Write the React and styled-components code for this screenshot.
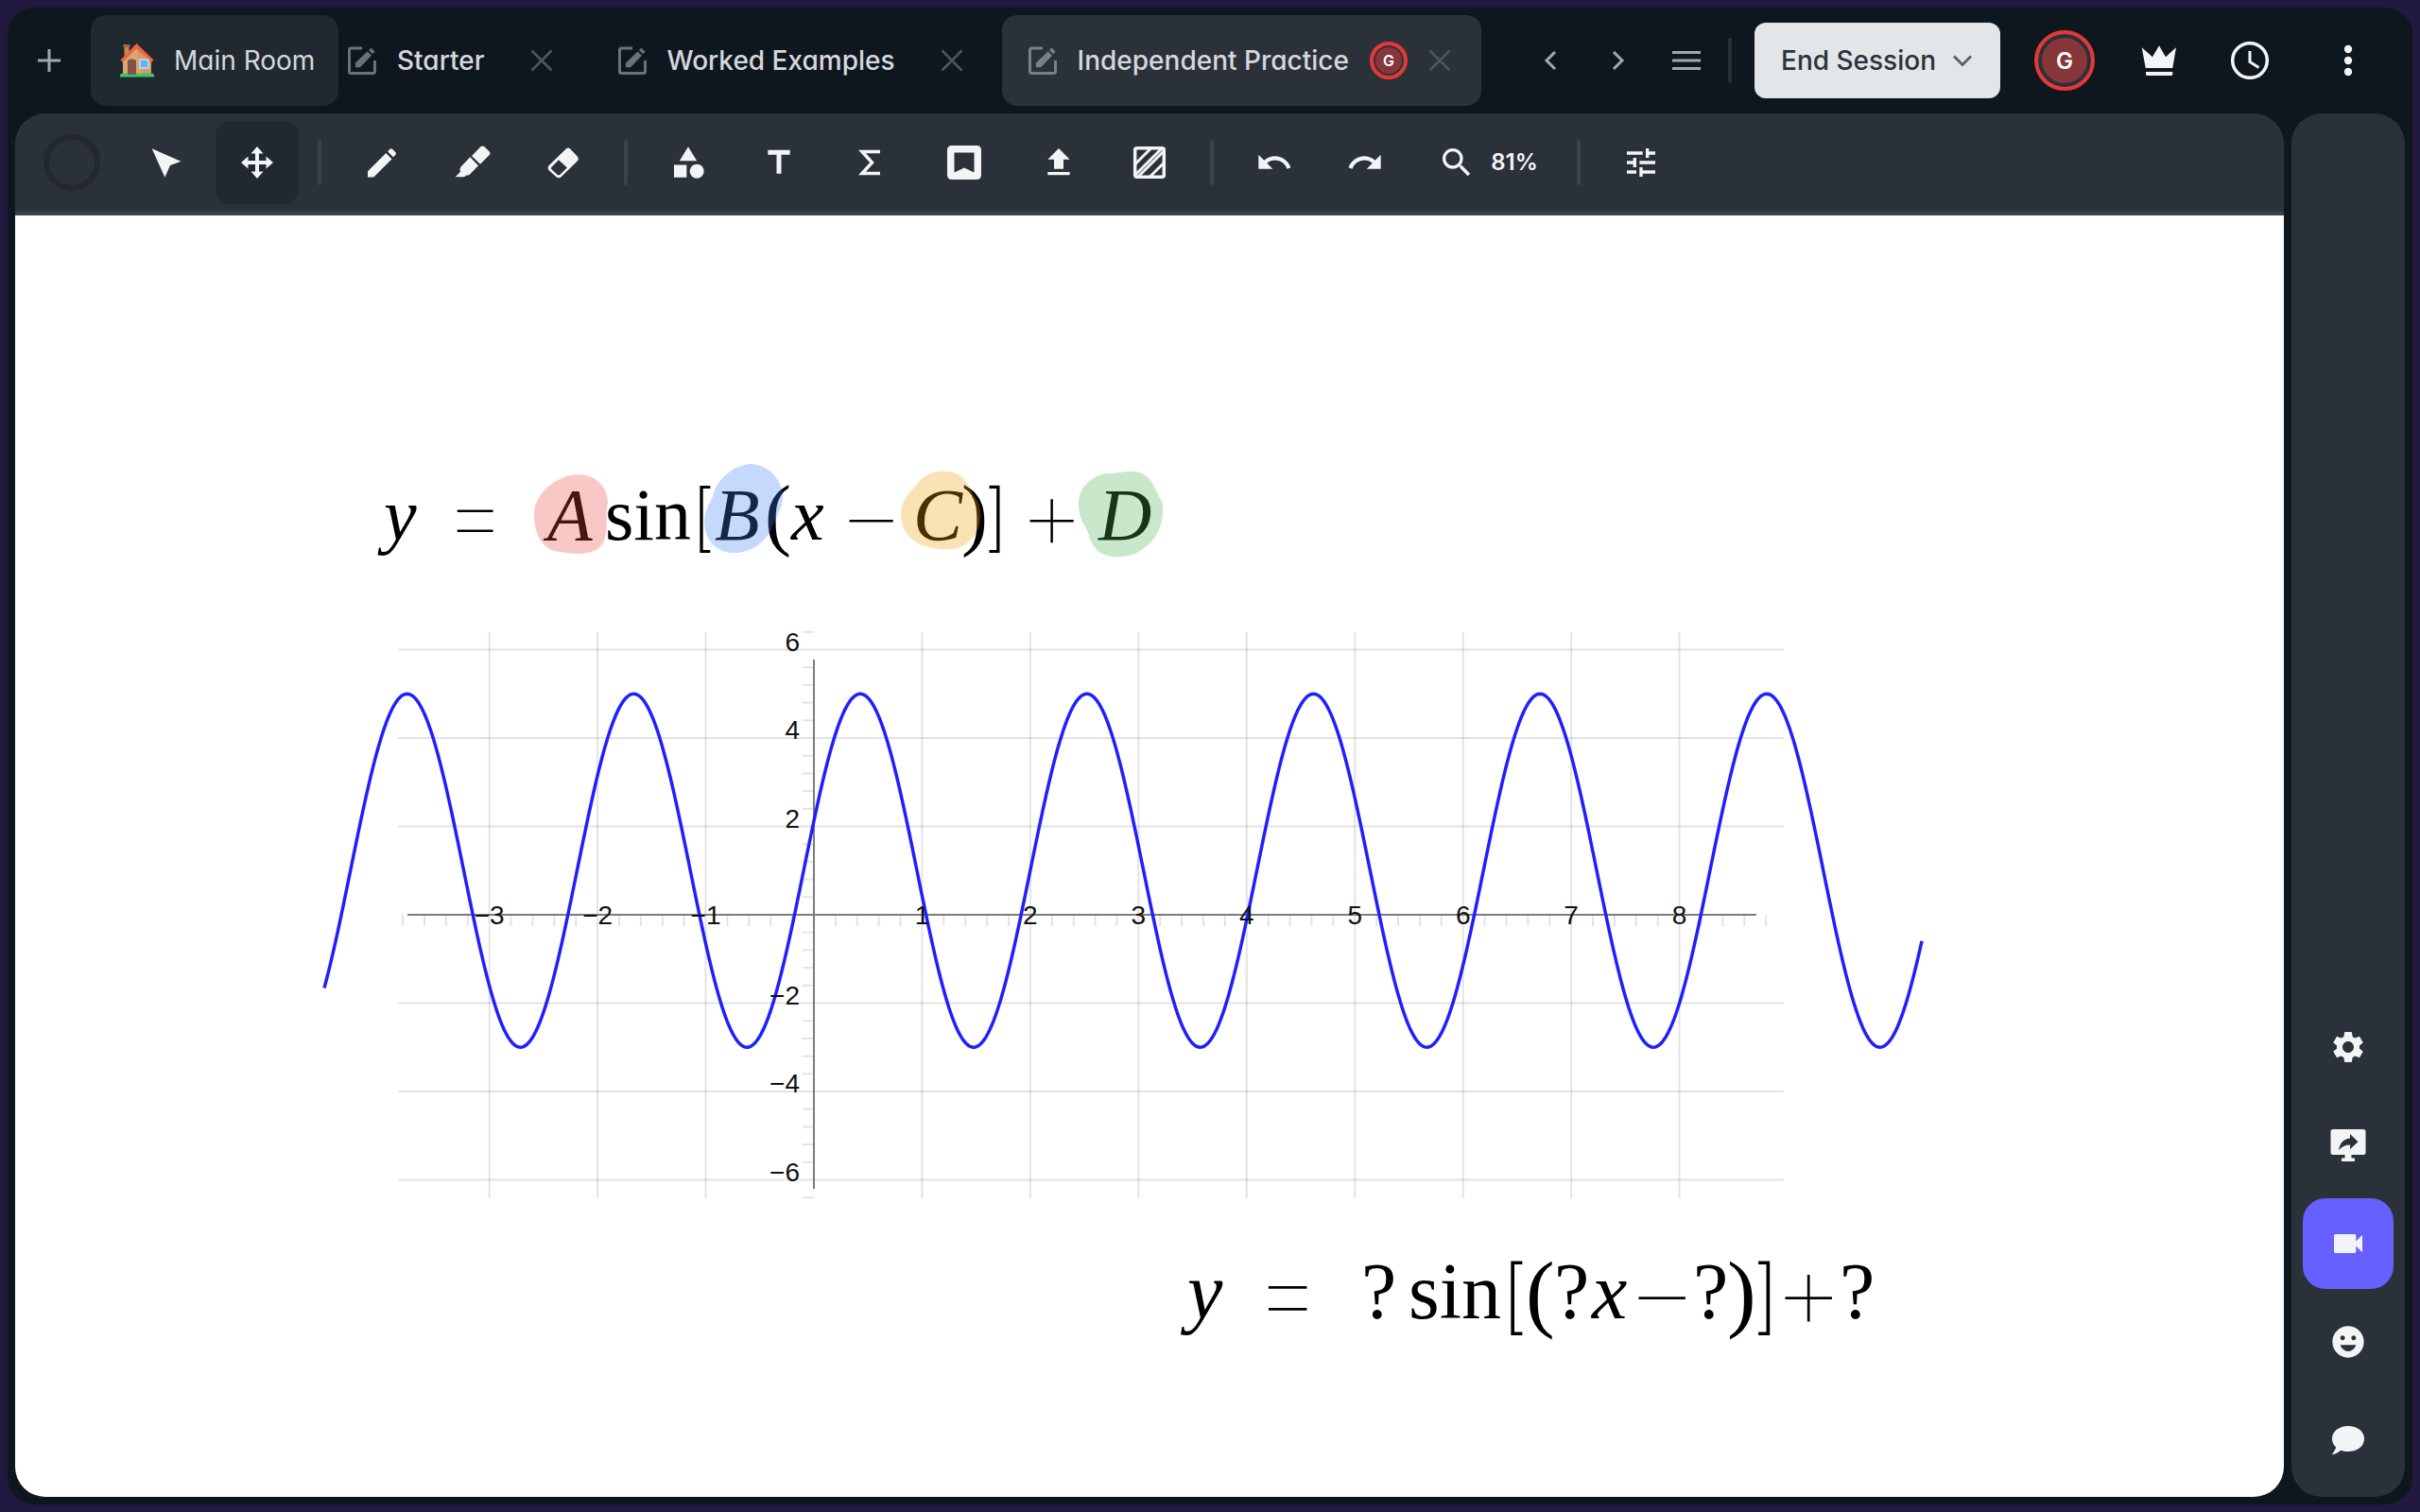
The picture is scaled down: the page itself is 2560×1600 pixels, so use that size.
import React, { useState } from 'react'
import styled, { createGlobalStyle } from 'styled-components'
import {
    MdCategory, MdFileUpload, MdRedo, MdSearch, MdSettings, MdTitle, MdTune, MdUndo, MdVideocam, MdEmojiEmotions
} from 'react-icons/md'

const GlobalStyle = createGlobalStyle`
    * { box-sizing: border-box; }
    body {
        margin: 0;
        background: #21193f;
        font-family: Inter, 'Liberation Sans', sans-serif;
        font-feature-settings: 'cv11';
    }
    button {
        font: inherit;
        font-feature-settings: inherit;
        color: inherit;
        border: 0;
        padding: 0;
        background: none;
        cursor: pointer;
    }
    svg { display: block; flex: none; }
`

const Page = styled.div`
    height: 100vh;
    padding: 8px;
`
const Shell = styled.div`
    height: 100%;
    display: flex;
    flex-direction: column;
    background: #0f171e;
    border-radius: 28px;
    overflow: hidden;
`
const Header = styled.header`
    height: 112px;
    flex: none;
    display: flex;
    align-items: center;
    padding: 0 20px 0 8px;
    color: #f3f4f6;
`
const TabStrip = styled.nav`
    flex: 1;
    min-width: 0;
    display: flex;
    gap: 9px;
    overflow: hidden;
`
const Tab = styled.div`
    height: 96px;
    display: flex;
    align-items: center;
    gap: 22px;
    padding: 0 32px 0 ${ props => props.$clipped ? '10px' : '28px' };
    border-radius: 16px;
    background: ${ props => props.$active ? '#2a3139' : 'transparent' };
    color: ${ props => props.$active ? '#7b8086' : '#6b7079' };
`
const TabLabel = styled.button`
    font-size: 28px;
    line-height: 36px;
    font-weight: 500;
    color: #d5d8dc;
    white-space: nowrap;
`
const TabClose = styled.button`
    width: 24px;
    height: 24px;
    margin-left: ${ props => props.$spaced ? '26px' : '0' };
    color: #50565e;
`
const HomeTab = styled.button`
    width: 262px;
    height: 96px;
    display: flex;
    align-items: center;
    gap: 20px;
    padding-left: 30px;
    margin-left: 8px;
    border-radius: 16px;
    background: #202830;
    color: #d5d8dc;
    font-size: 28px;
    line-height: 36px;
    white-space: nowrap;
`
const HeaderButton = styled.button`
    width: ${ props => props.$wide ? '96px' : '72px' };
    height: 96px;
    flex: none;
    display: flex;
    align-items: center;
    justify-content: center;
    color: ${ props => props.$muted ? '#a3a7ad' : '#f3f4f6' };
`
const HeaderActions = styled.div`
    display: flex;
    align-items: center;
`
const SessionIcons = styled.div`
    display: flex;
    margin-right: 8px;
`
const Divider = styled.span`
    width: 4px;
    height: 48px;
    flex: none;
    border-radius: 2px;
    background: ${ props => props.$dark ? '#262e36' : '#3a424b' };
    margin: ${ props => props.$dark ? '0 24px 0 8px' : '0 12px' };
`
const EndSession = styled.button`
    width: 260px;
    height: 80px;
    display: flex;
    align-items: center;
    gap: 16px;
    padding-left: 28px;
    border-radius: 12px;
    background: #e2e6e9;
    color: #2b323b;
    font-size: 28px;
    line-height: 36px;
    font-weight: 500;
    white-space: nowrap;
    svg { color: #5b626b; }
`
const Avatar = styled.span`
    width: ${ props => props.$large ? '64px' : '40px' };
    height: ${ props => props.$large ? '64px' : '40px' };
    flex: none;
    display: flex;
    align-items: center;
    justify-content: center;
    margin: ${ props => props.$large ? '0 20px 0 36px' : '0' };
    border: 4px solid #e53835;
    border-radius: 50%;
    background: #87363a;
    box-shadow: inset 0 0 0 ${ props => props.$large ? '4px' : '2px' } #2a3139;
    color: #fff;
    font-size: ${ props => props.$large ? '24px' : '16px' };
    font-weight: 600;
`
const Main = styled.main`
    flex: 1;
    min-height: 0;
    display: flex;
    gap: 8px;
    padding: 0 8px 8px;
`
const Board = styled.section`
    flex: 1;
    min-width: 0;
    display: flex;
    flex-direction: column;
    border-radius: 32px;
    overflow: hidden;
    background: #2a3139;
`
const Toolbar = styled.div`
    flex: none;
    height: 108px;
    display: flex;
    align-items: center;
    gap: 8px;
    padding: 0 12px;
    border-bottom: 4px solid #39424a;
    color: #f3f4f6;
`
const Tool = styled.button`
    width: ${ props => props.$wide ? '96px' : '88px' };
    height: 88px;
    flex: none;
    display: flex;
    align-items: center;
    justify-content: center;
    border-radius: 16px;
    background: ${ props => props.$active ? '#202831' : 'transparent' };
`
const Zoom = styled(Tool)`
    width: 152px;
    gap: 16px;
    padding-left: 4px;
    font-size: 24px;
    line-height: 32px;
    font-weight: 600;
`
const Swatch = styled.span`
    width: 60px;
    height: 60px;
    border: 6px solid #25282b;
    border-radius: 50%;
`
const Canvas = styled.div`
    flex: 1;
    min-height: 0;
    position: relative;
    background: #fff;
`
const CanvasItem = styled.svg`
    position: absolute;
    left: ${ props => props.$x }px;
    top: ${ props => props.$y }px;
    overflow: visible;
`
const Sidebar = styled.aside`
    width: 120px;
    flex: none;
    display: flex;
    flex-direction: column;
    align-items: center;
    justify-content: flex-end;
    gap: 8px;
    padding-bottom: 12px;
    border-radius: 32px;
    background: #2a3139;
    color: #f3f4f6;
`
const SideButton = styled.button`
    width: 96px;
    height: 96px;
    display: flex;
    align-items: center;
    justify-content: center;
    border-radius: 24px;
    background: ${ props => props.$active ? '#6560ff' : 'transparent' };
`
const MathText = styled.text`
    font-family: 'Liberation Serif', serif;
    font-style: ${ props => props.$italic ? 'italic' : 'normal' };
    font-size: ${ props => props.$size }px;
    fill: #000;
`
const Operator = styled.text`
    font-family: Inter, sans-serif;
    font-weight: ${ props => props.$thin ? 100 : 200 };
    font-size: ${ props => props.$size }px;
    fill: #000;
`
const AxisLabel = styled.text`
    font-family: 'Liberation Sans', sans-serif;
    font-size: 28px;
    fill: #111;
    text-anchor: ${ props => props.$end ? 'end' : 'middle' };
`

const Icon = ({ size = 40, children }) => (
    <svg width={ size } height={ size } viewBox={ `0 0 ${ size } ${ size }` } fill="currentColor" aria-hidden="true">
        { children }
    </svg>
)

const Line = ({ d, width = 3 }) => <path d={ d } fill="none" stroke="currentColor" strokeWidth={ width }/>

const CloseIcon = () => (
    <Icon size={ 24 }><Line d="M1.5 1.5 22.5 22.5M22.5 1.5 1.5 22.5" width={ 2.5 }/></Icon>
)

const EditIcon = () => (
    <Icon size={ 30 }>
        <path d="M15 2H3.500Q1.500 2 1.500 4V26.500Q1.500 28.500 3.500 28.500H26.500Q28.500 28.500 28.500 26.500V15" fill="none" stroke="currentColor" strokeWidth="3"/>
        <path d="M8 22.300V17.500L20.500 5.500 25 9.800 13 22.300ZM22 4 24.500 1.800 28.500 5.500 26.300 8.200Z"/>
    </Icon>
)

const HouseIcon = () => (
    <svg width="38" height="38" viewBox="0 0 38 38" aria-hidden="true">
        <rect x="5.500" y="3" width="5" height="14" fill="#c78a4c"/>
        <rect x="4.500" y="2" width="7" height="3" fill="#9d6b48"/>
        <path d="M4 19 18.500 5 34 19V34H4Z" fill="#dba673"/>
        <path d="M18.500 5 34 19V34H24Z" fill="#d49a68"/>
        <path d="M1.500 18.500 18.500 1 36.500 18.500 34.500 21 18.500 6.500 3.500 21Z" fill="#f0643a"/>
        <path d="M9 34V20Q9 17.500 13.500 17.500T18 20V34Z" fill="#7f5547"/>
        <rect x="22" y="18" width="9" height="9" fill="#5ab7fb" stroke="#e8f3fa"/>
        <path d="M1 34.500Q1 32.500 5 32.500H33Q37 32.500 37 34.500V36.500H1Z" fill="#41c463"/>
        <rect x="9" y="31" width="9" height="3" fill="#7f5547"/>
    </svg>
)

const CursorIcon = () => <Icon><path d="M4.700 5.300 35.400 18.700 24 23 18.400 35.700Z"/></Icon>

const MoveIcon = () => (
    <Icon>
        <path d="M18 9H22V18H31V22H22V31H18V22H9V18H18Z"/>
        <path d="M20 3 26.500 10.500H13.500ZM20 37 13.500 29.500H26.500ZM3 20 10.500 13.500V26.500ZM37 20 29.500 26.500V13.500Z"/>
    </Icon>
)

const PencilIcon = () => (
    <Icon><path d="M5 35.500V29.300L24.300 10 30.500 16.200 11.300 35.500ZM26 8.300 28.300 6Q29.800 4.500 31.300 6L34.300 9Q35.800 10.500 34.300 12L32 14.200Z"/></Icon>
)

const HighlighterIcon = () => (
    <Icon>
        <path d="M19 13 28.500 3.300Q30.500 1.500 32.500 3.300L37.500 8.300Q39.300 10.300 37.500 12.200L28 21.700Z"/>
        <path d="M17.300 14.300 26 23.300 17.500 32Q16 33.800 13.500 33.500L11 35.300H1.700L7 29.700Q5.800 26.500 7.500 24.500Z"/>
    </Icon>
)

const EraserIcon = () => (
    <Icon>
        <path fillRule="evenodd" d="M4.500 23.300 22.800 5.500Q25 3.700 27.200 5.500L35 13.800Q36.800 16 35 18.200L17.500 35.300Q15 37.300 12.500 35.300L4.700 28.200Q2.700 25.800 4.500 23.300ZM15 17.300 23.900 25.500 16.500 32.700Q15 34 13.500 32.700L7.300 27Q6.500 26 7.300 25Z"/>
    </Icon>
)

const SigmaIcon = () => <Icon><Line d="M31 8.500H12L22.500 20 12 31.500H31" width={ 3.5 }/></Icon>

const BookmarkIcon = () => (
    <Icon><path fillRule="evenodd" d="M7 2H33Q38 2 38 7V33Q38 38 33 38H7Q2 38 2 33V7Q2 2 7 2ZM9.500 9.500V30.500L20 25.500 30.500 30.500V9.500Z"/></Icon>
)

const HatchIcon = () => (
    <Icon>
        <rect x="4.700" y="4.700" width="30.600" height="30.600" rx="2" fill="none" stroke="currentColor" strokeWidth="3.500"/>
        <Line d="M5 21.500 21.500 5M5 33 33 5M8 35 35 8M20.500 35 35 20.500" width={ 3 }/>
    </Icon>
)

const CrownIcon = () => (
    <Icon><path d="M1.700 6.300 13 16.300 20 4.300 27 16.300 38 6.300 34.300 28H5.700ZM6 32H34.300V34.500Q34.300 36 33 36H7.500Q6 36 6 34.500Z"/></Icon>
)

const ClockIcon = () => (
    <Icon>
        <circle cx="20" cy="20" r="18.300" fill="none" stroke="currentColor" strokeWidth="3.500"/>
        <Line d="M20 10V21.500L29.500 27.500" width={ 3 }/>
    </Icon>
)

const DotsIcon = () => (
    <Icon><circle cx="20" cy="8" r="4.200"/><circle cx="20" cy="20" r="4.200"/><circle cx="20" cy="32" r="4.200"/></Icon>
)

const PresentIcon = () => (
    <Icon>
        <path fillRule="evenodd" d="M4 3H36Q38.500 3 38.500 5.500V27.500Q38.500 30 36 30H23.500V33.500H27V37H13V33.500H16.500V30H4Q1.500 30 1.500 27.500V5.500Q1.500 3 4 3ZM22 8V12.500C14 13.500 11.200 18.500 10 25 13 21.500 17 19.500 22 19.500V24L30.500 16.200Z"/>
    </Icon>
)

const ChatIcon = () => (
    <Icon>
        <path d="M20 5C29.500 5 37 10.500 37 18.500S29.500 32 20 32C17 32 14.500 31.500 12 30.700 9.500 33 6 35 3.500 35 3 35 3 34.500 3.300 34.200 5 32.500 6.500 30 7.200 27.600 4.500 25.200 3 22 3 18.500 3 10.500 10.500 5 20 5Z"/>
    </Icon>
)

const tabs = [
    { name: 'Starter', clipped: true },
    { name: 'Worked Examples' },
    { name: 'Independent Practice', user: 'G' },
]

const tools = [
    { name: 'Select', icon: <CursorIcon/> },
    { name: 'Move', icon: <MoveIcon/> },
    null,
    { name: 'Pencil', icon: <PencilIcon/> },
    { name: 'Highlighter', icon: <HighlighterIcon/> },
    { name: 'Eraser', icon: <EraserIcon/> },
    null,
    { name: 'Shapes', icon: <MdCategory size={ 40 }/> },
    { name: 'Text', icon: <MdTitle size={ 40 }/> },
    { name: 'Equation', icon: <SigmaIcon/> },
    { name: 'Bookmark', icon: <BookmarkIcon/>, wide: true },
    { name: 'Upload', icon: <MdFileUpload size={ 40 }/> },
    { name: 'Background', icon: <HatchIcon/> },
    null,
    { name: 'Undo', icon: <MdUndo size={ 40 }/> },
    { name: 'Redo', icon: <MdRedo size={ 40 }/> },
]

const panels = [
    { name: 'Settings', icon: <MdSettings size={ 40 }/> },
    { name: 'Share screen', icon: <PresentIcon/> },
    { name: 'Video', icon: <MdVideocam size={ 40 }/> },
    { name: 'Reactions', icon: <MdEmojiEmotions size={ 40 }/> },
    { name: 'Chat', icon: <ChatIcon/> },
]

const Formula = () => (
    <CanvasItem $x={ 380 } $y={ 252 } width="864" height="124">
        <MathText $italic $size={ 78 } x="10" y="91">y</MathText>
        <Operator $thin $size={ 112 } x="71" y="103">=</Operator>
        <MathText $italic $size={ 78 } x="183" y="91">A</MathText>
        <MathText $size={ 78 } x="244" y="91">sin</MathText>
        <Operator $size={ 78 } x="335" y="94">[</Operator>
        <MathText $italic $size={ 78 } x="360" y="91">B</MathText>
        <MathText $size={ 84 } x="413" y="92">(</MathText>
        <MathText $italic $size={ 78 } x="441" y="91">x</MathText>
        <Operator $thin $size={ 112 } x="490" y="103">−</Operator>
        <MathText $italic $size={ 78 } x="570" y="91">C</MathText>
        <MathText $size={ 84 } x="621" y="92">)</MathText>
        <Operator $size={ 78 } x="645" y="94">]</Operator>
        <Operator $thin $size={ 112 } x="681" y="103">+</Operator>
        <MathText $italic $size={ 78 } x="766" y="91">D</MathText>
        <g fillOpacity="0.3">
            <path fill="#ef4444" d="M169 64C169 44 190 24 214 22 232 21 247 34 247 52 243 66 250 84 240 97 232 108 210 107 198 104 180 104 169 88 169 64Z"/>
            <path fill="#3b82f6" d="M349 72C349 58 358 50 360 38 368 22 382 13 397 11 416 11 432 27 432 46 432 58 424 68 420 80 412 96 396 106 378 105 362 104 349 92 349 72Z"/>
            <path fill="#f0a00b" d="M557 64C557 50 566 42 574 32 584 20 598 16 612 20 628 24 630 40 638 50 644 62 642 82 630 92 620 102 606 103 592 100 570 98 557 82 557 64Z"/>
            <path fill="#4caf50" d="M745 52C745 36 758 24 774 21 784 22 792 18 804 19 822 20 826 40 834 52 836 72 828 92 814 100 802 110 784 112 770 106 756 98 758 86 750 74 746 66 745 60 745 52Z"/>
        </g>
    </CanvasItem>
)

const Question = () => (
    <CanvasItem $x={ 1228 } $y={ 1088 } width="748" height="124">
        <MathText $italic $size={ 84 } x="12" y="79">y</MathText>
        <Operator $thin $size={ 120 } x="80" y="92">=</Operator>
        <MathText $size={ 84 } x="196" y="79">?</MathText>
        <MathText $size={ 84 } x="246" y="79">sin</MathText>
        <Operator $size={ 86 } x="344" y="85">[</Operator>
        <MathText $size={ 92 } x="370" y="82">(</MathText>
        <MathText $size={ 84 } x="400" y="79">?</MathText>
        <MathText $italic $size={ 84 } x="440" y="79">x</MathText>
        <Operator $thin $size={ 120 } x="476" y="92">−</Operator>
        <MathText $size={ 84 } x="547" y="79">?</MathText>
        <MathText $size={ 92 } x="583" y="82">)</MathText>
        <Operator $size={ 86 } x="610" y="85">]</Operator>
        <Operator $thin $size={ 120 } x="631" y="92">+</Operator>
        <MathText $size={ 84 } x="702" y="79">?</MathText>
    </CanvasItem>
)

// plot space: pixels per unit and where the axes cross
const UNIT_X = 114.45
const UNIT_Y = 46.75
const ORIGIN_X = 525
const ORIGIN_Y = 320

const px = x => ORIGIN_X + x * UNIT_X
const py = y => ORIGIN_Y - y * UNIT_Y
const range = (from, to) => Array.from({ length: to - from + 1 }, (_, i) => from + i)
const signed = n => String(n).replace('-', '−')

const curve = range(0, 845).map(i => {
    const left = 7 + i * 2
    const x = (left - ORIGIN_X) / UNIT_X
    return `${ i ? 'L' : 'M' }${ left } ${ py(4 * Math.sin(3 * (x + 0.095)) + 1).toFixed(2) }`
}).join('')

const Graph = () => (
    <CanvasItem $x={ 320 } $y={ 420 } width="1704" height="640">
        <g stroke="#000" strokeOpacity="0.11" strokeWidth="2">
            { range(-3, 8).filter(n => n !== 0).map(n => <line key={ n } x1={ px(n) } x2={ px(n) } y1="21" y2="620"/>) }
            { [6, 4, 2, -2, -4, -6].map(n => <line key={ n } x1="85" x2="1551" y1={ py(n) } y2={ py(n) }/>) }
            { range(-19, 44).filter(n => n % 5).map(n => <line key={ n } x1={ px(n / 5) } x2={ px(n / 5) } y1="320" y2="332"/>) }
            { range(-16, 16).filter(n => n % 5).map(n => <line key={ n } x1="513" x2="525" y1={ py(n / 2.5) } y2={ py(n / 2.5) }/>) }
        </g>
        <g stroke="#7c7c7c" strokeWidth="2">
            <line x1="95" x2="1522" y1="320" y2="320"/>
            <line x1={ ORIGIN_X } x2={ ORIGIN_X } y1="50" y2="610"/>
        </g>
        <path d={ curve } fill="none" stroke="#1f1fff" strokeWidth="3.500"/>
        { range(-3, 8).filter(n => n !== 0).map(n => <AxisLabel key={ n } x={ px(n) } y="330">{ signed(n) }</AxisLabel>) }
        { [6, 4, 2, -2, -4, -6].map(n => <AxisLabel key={ n } $end x="510" y={ py(n) + 1 }>{ signed(n) }</AxisLabel>) }
    </CanvasItem>
)

const App = () => {
    let [activeTab, setActiveTab] = useState('Independent Practice')
    let [activeTool, setActiveTool] = useState('Move')
    let [activePanel, setActivePanel] = useState('Video')

    return (
        <Page>
            <GlobalStyle/>
            <Shell>
                <Header>
                    <HeaderButton $muted aria-label="New tab">
                        <Icon size={ 24 }><Line d="M12 0V24M0 12H24"/></Icon>
                    </HeaderButton>
                    <HomeTab><HouseIcon/>Main Room</HomeTab>
                    <TabStrip>
                        { tabs.map(tab => (
                            <Tab key={ tab.name } $active={ tab.name === activeTab } $clipped={ tab.clipped }>
                                <EditIcon/>
                                <TabLabel onClick={ () => setActiveTab(tab.name) }>{ tab.name }</TabLabel>
                                { tab.user && <Avatar>{ tab.user }</Avatar> }
                                <TabClose $spaced={ !tab.user } aria-label="Close tab"><CloseIcon/></TabClose>
                            </Tab>
                        )) }
                    </TabStrip>
                    <HeaderActions>
                        <HeaderButton $muted aria-label="Previous tab"><Icon size={ 24 }><Line d="M17 3 8 12 17 21"/></Icon></HeaderButton>
                        <HeaderButton $muted aria-label="Next tab"><Icon size={ 24 }><Line d="M7 3 16 12 7 21"/></Icon></HeaderButton>
                        <HeaderButton $muted aria-label="Tab list"><Icon size={ 30 }><Line d="M0 6.500H30M0 15H30M0 23.500H30"/></Icon></HeaderButton>
                        <Divider $dark/>
                        <EndSession>
                            End Session
                            <Icon size={ 24 }><Line d="M3 7.500 12 16.500 21 7.500"/></Icon>
                        </EndSession>
                        <Avatar $large>G</Avatar>
                        <SessionIcons>
                            <HeaderButton $wide aria-label="Leader"><CrownIcon/></HeaderButton>
                            <HeaderButton $wide aria-label="Timer"><ClockIcon/></HeaderButton>
                        </SessionIcons>
                        <HeaderButton $wide aria-label="More"><DotsIcon/></HeaderButton>
                    </HeaderActions>
                </Header>
                <Main>
                    <Board>
                        <Toolbar>
                            <Tool $wide aria-label="Colour"><Swatch/></Tool>
                            { tools.map((tool, i) => tool ? (
                                <Tool key={ i } $wide={ tool.wide } $active={ tool.name === activeTool } aria-label={ tool.name }
                                      onClick={ () => setActiveTool(tool.name) }>
                                    { tool.icon }
                                </Tool>
                            ) : <Divider key={ i }/>) }
                            <Zoom><MdSearch size={ 40 }/>81%</Zoom>
                            <Divider/>
                            <Tool aria-label="Options"><MdTune size={ 40 }/></Tool>
                        </Toolbar>
                        <Canvas>
                            <Formula/>
                            <Graph/>
                            <Question/>
                        </Canvas>
                    </Board>
                    <Sidebar>
                        { panels.map(panel => (
                            <SideButton key={ panel.name } $active={ panel.name === activePanel } aria-label={ panel.name }
                                        onClick={ () => setActivePanel(panel.name) }>
                                { panel.icon }
                            </SideButton>
                        )) }
                    </Sidebar>
                </Main>
            </Shell>
        </Page>
    )
}

export default App
